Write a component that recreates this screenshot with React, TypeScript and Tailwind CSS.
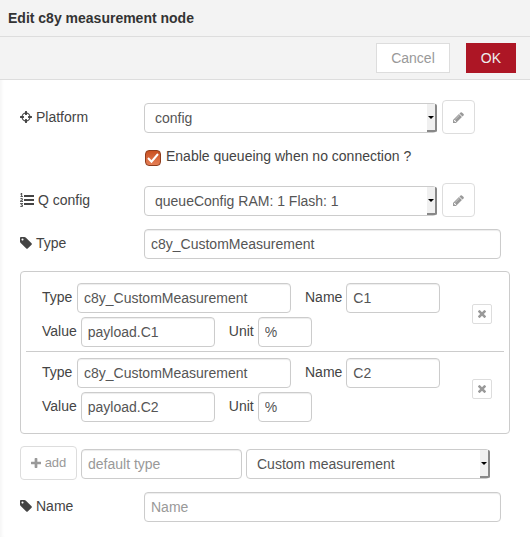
import { useState } from "react";
import type { ReactNode } from "react";

const ICONS = {
  crosshairs: {
    box: "128 128 1536 1536",
    d: "M1325 1024h-109q-26 0-45-19t-19-45v-128q0-26 19-45t45-19h109q-32-108-112.5-188.5t-188.5-112.5v109q0 26-19 45t-45 19h-128q-26 0-45-19t-19-45v-109q-108 32-188.5 112.5t-112.5 188.5h109q26 0 45 19t19 45v128q0 26-19 45t-45 19h-109q32 108 112.5 188.5t188.5 112.5v-109q0-26 19-45t45-19h128q26 0 45 19t19 45v109q108-32 188.5-112.5t112.5-188.5zm339-192v128q0 26-19 45t-45 19h-143q-37 161-154.5 278.5t-278.5 154.5v143q0 26-19 45t-45 19h-128q-26 0-45-19t-19-45v-143q-161-37-278.5-154.5t-154.5-278.5h-143q-26 0-45-19t-19-45v-128q0-26 19-45t45-19h143q37-161 154.5-278.5t278.5-154.5v-143q0-26 19-45t45-19h128q26 0 45 19t19 45v143q161 37 278.5 154.5t154.5 278.5h143q26 0 45 19t19 45z",
  },
  list: {
    box: "0 0 1792 1792",
    d: "M381 1620q0 80-54.5 126t-135.5 46q-106 0-172-66l57-88q49 45 106 45 29 0 50.5-14.5t21.5-42.5q0-64-105-56l-26-56q8-10 32.5-43.5t42.5-54 37-38.5v-1q-16 0-48.5 1t-48.5 1v53h-106v-152h333v88l-95 115q51 12 81 49t30 88zm2-627v159h-362q-6-36-6-54 0-51 23.5-93t56.5-68 66-47.5 56.5-43.5 23.5-45q0-25-14.5-38.5t-39.5-13.5q-46 0-81 58l-85-59q24-51 71.5-79.5t105.5-28.5q73 0 123 41.5t50 112.5q0 50-34 91.5t-75 64.5-75.5 50.5-35.5 52.5h127v-60h105zm1409 319v192q0 13-9.5 22.5t-22.5 9.5h-1216q-13 0-22.5-9.5t-9.5-22.5v-192q0-14 9-23t23-9h1216q13 0 22.5 9.5t9.5 22.5zm-1408-899v99h-335v-99h107q0-41 .5-122t.5-121v-12h-2q-8 17-50 54l-71-76 136-127h106v404h108zm1408 387v192q0 13-9.5 22.5t-22.5 9.5h-1216q-13 0-22.5-9.5t-9.5-22.5v-192q0-14 9-23t23-9h1216q13 0 22.5 9.5t9.5 22.5zm0-512v192q0 13-9.5 22.5t-22.5 9.5h-1216q-13 0-22.5-9.5t-9.5-22.5v-192q0-13 9.5-22.5t22.5-9.5h1216q13 0 22.5 9.5t9.5 22.5z",
  },
  tag: {
    box: "128 128 1536 1536",
    d: "M576 448q0-53-37.5-90.5t-90.5-37.5-90.5 37.5-37.5 90.5 37.5 90.5 90.5 37.5 90.5-37.5 37.5-90.5zm1067 576q0 53-37 90l-491 492q-39 37-91 37-53 0-90-37l-715-716q-38-37-64.5-101t-26.5-117v-416q0-52 38-90t90-38h416q53 0 117 26.5t102 64.5l715 714q37 39 37 91z",
  },
  pencil: {
    box: "128 128 1536 1536",
    d: "M491 1536l91-91-235-235-91 91v107h128v128h107zm523-928q0-22-22-22-10 0-17 7l-542 542q-7 7-7 17 0 22 22 22 10 0 17-7l542-542q7-7 7-17zm-54-192l416 416-832 832h-416v-416zm683 96q0 53-37 90l-166 166-416-416 166-165q36-38 90-38 53 0 91 38l235 234q37 39 37 91z",
  },
  remove: {
    box: "302 366 1188 1188",
    d: "M1490 1322q0 40-28 68l-136 136q-28 28-68 28t-68-28l-294-294-294 294q-28 28-68 28t-68-28l-136-136q-28-28-28-68t28-68l294-294-294-294q-28-28-28-68t28-68l136-136q28-28 68-28t68 28l294 294 294-294q28-28 68-28t68 28l136 136q28 28 28 68t-28 68l-294 294 294 294q28 28 28 68z",
  },
  plus: {
    box: "192 128 1408 1408",
    d: "M1600 736v192q0 40-28 68t-68 28h-416v416q0 40-28 68t-68 28h-192q-40 0-68-28t-28-68v-416h-416q-40 0-68-28t-28-68v-192q0-40 28-68t68-28h416v-416q0-40 28-68t68-28h192q40 0 68 28t28 68v416h416q40 0 68 28t28 68z",
  },
};

function Icon({ name, className }: { name: keyof typeof ICONS; className: string }) {
  return (
    <svg viewBox={ICONS[name].box} fill="currentColor" className={className} aria-hidden="true">
      <path d={ICONS[name].d} />
    </svg>
  );
}

const field =
  "mt-0.5 h-[30px] rounded border border-[#ccc] bg-white px-1.5 text-[#555] shadow-[inset_0_1px_1px_rgba(0,0,0,0.075)] outline-none placeholder:text-[#999]";

function SelectBox({ id, label, options }: { id: string; label?: string; options: string[] }) {
  return (
    <div className="relative mt-0.5 h-[30px] min-w-0 flex-1">
      <select
        id={id}
        aria-label={label}
        className="h-full w-full appearance-none rounded border border-[#ccc] bg-white pr-3 pl-2.5 text-[#555] outline-none"
      >
        {options.map((option) => (
          <option key={option}>{option}</option>
        ))}
      </select>
      <span className="pointer-events-none absolute top-px right-0 bottom-px flex w-2.5 items-center justify-center rounded-r-xs border-r-2 border-b-2 border-[#888] bg-[#f0f0f0]">
        <svg viewBox="0 0 6 3" className="h-[3px] w-1.5 shrink-0" aria-hidden="true">
          <path d="M0 0h6L3 3z" />
        </svg>
      </span>
    </div>
  );
}

function RowLabel({ htmlFor, icon, children }: { htmlFor: string; icon: ReactNode; children: ReactNode }) {
  return (
    <label htmlFor={htmlFor} className="flex w-31 shrink-0 items-center gap-1">
      {icon}
      {children}
    </label>
  );
}

function EditButton({ label }: { label: string }) {
  return (
    <button
      type="button"
      aria-label={label}
      className="flex h-[34px] w-[33px] shrink-0 items-center justify-center rounded border border-[#ddd] bg-white text-[#999]"
    >
      <Icon name="pencil" className="size-[11px]" />
    </button>
  );
}

function Measurement({ index, name, value }: { index: number; name: string; value: string }) {
  return (
    <li className="flex items-center justify-between border-b border-[#ccc] py-1 pr-3 pl-4 last:border-b-0">
      <div className="flex flex-col gap-0.5">
        <div className="flex items-center gap-3.5">
          <label className="flex items-center gap-1">
            <span className="min-w-[31px]">Type</span>
            <input className={`${field} w-[214px]`} defaultValue="c8y_CustomMeasurement" />
          </label>
          <label className="flex items-center gap-1">
            Name
            <input className={`${field} w-[94px]`} defaultValue={name} />
          </label>
        </div>
        <div className="flex items-center gap-3.5">
          <label className="flex items-center gap-1">
            Value
            <input className={`${field} w-[134px]`} defaultValue={value} />
          </label>
          <label className="flex items-center gap-1">
            Unit
            <input className={`${field} w-[54px]`} defaultValue="%" />
          </label>
        </div>
      </div>
      <button
        type="button"
        aria-label={`Remove measurement ${index}`}
        className="flex size-5 items-center justify-center rounded-xs border border-[#ddd] bg-white text-[#999]"
      >
        <Icon name="remove" className="size-2" />
      </button>
    </li>
  );
}

export default function App() {
  const [queueing, setQueueing] = useState(true);

  return (
    <div className="min-h-screen bg-white font-['Liberation_Sans',Arial,sans-serif] text-sm leading-5 text-[#444] shadow-[inset_4px_0_4px_-3px_rgba(0,0,0,0.06)]">
      <header className="border-b border-[#ddd] bg-[#f3f3f3] px-2 py-2">
        <h1 className="font-bold text-[#333]">Edit c8y measurement node</h1>
      </header>
      <div className="flex justify-end gap-4 border-b border-[#ddd] bg-[#f3f3f3] px-3.5 py-1.5">
        <button type="button" className="h-[30px] border border-[#ddd] bg-white px-3.5 text-[#999]">
          Cancel
        </button>
        <button type="button" className="h-[30px] bg-[#ad1625] px-[15px] text-[#eee]">
          OK
        </button>
      </div>

      <form className="px-5 pt-5 pb-3" onSubmit={(event) => event.preventDefault()}>
        <div className="flex items-center">
          <RowLabel htmlFor="platform" icon={<Icon name="crosshairs" className="size-3" />}>
            Platform
          </RowLabel>
          <div className="mr-[35px] flex min-w-0 flex-1 items-center gap-[5px]">
            <SelectBox id="platform" options={["config"]} />
            <EditButton label="Edit platform" />
          </div>
        </div>

        <div className="mt-3 mb-[17px] flex items-center gap-[5px] pl-[125px]">
          <span className="relative mt-1 size-4">
            <input
              id="queueing"
              type="checkbox"
              checked={queueing}
              onChange={(event) => setQueueing(event.target.checked)}
              className="block size-4 appearance-none rounded border border-[#a8a8a8] bg-white checked:border-[#8f3d1d] checked:bg-linear-to-b checked:from-[#c9501f] checked:to-[#e57f55]"
            />
            {queueing && (
              <svg viewBox="0 0 16 16" className="pointer-events-none absolute inset-0 size-4" aria-hidden="true">
                <path d="M3 8l3.5 3.7 6.5-7.7" fill="none" stroke="#fff" strokeWidth="2" />
              </svg>
            )}
          </span>
          <label htmlFor="queueing">Enable queueing when no connection ?</label>
        </div>

        <div className="flex items-center">
          <RowLabel htmlFor="queue" icon={<Icon name="list" className="size-3.5" />}>
            Q config
          </RowLabel>
          <div className="mr-[35px] flex min-w-0 flex-1 items-center gap-[5px]">
            <SelectBox id="queue" options={["queueConfig RAM: 1 Flash: 1"]} />
            <EditButton label="Edit queue config" />
          </div>
        </div>

        <div className="mt-2.5 flex items-center">
          <RowLabel htmlFor="type" icon={<Icon name="tag" className="size-3" />}>
            Type
          </RowLabel>
          <input id="type" className={`${field} mr-[9px] min-w-0 flex-1`} defaultValue="c8y_CustomMeasurement" />
        </div>

        <ul className="my-3 rounded border border-[#ccc] px-[5px] pt-[5px] pb-[7px]">
          <Measurement index={1} name="C1" value="payload.C1" />
          <Measurement index={2} name="C2" value="payload.C2" />
        </ul>

        <div className="mr-5 flex items-center gap-1">
          <button
            type="button"
            className="flex h-[34px] w-[57px] items-center justify-center gap-1 rounded border border-[#ddd] bg-white text-[13px] text-[#999]"
          >
            <Icon name="plus" className="size-2.5" />
            add
          </button>
          <input aria-label="Default type" placeholder="default type" className={`${field} w-[161px]`} />
          <SelectBox id="kind" label="Measurement kind" options={["Custom measurement"]} />
        </div>

        <div className="mt-2.5 flex items-center">
          <RowLabel htmlFor="name" icon={<Icon name="tag" className="size-3" />}>
            Name
          </RowLabel>
          <input id="name" placeholder="Name" className={`${field} mr-[9px] min-w-0 flex-1`} />
        </div>
      </form>
    </div>
  );
}
